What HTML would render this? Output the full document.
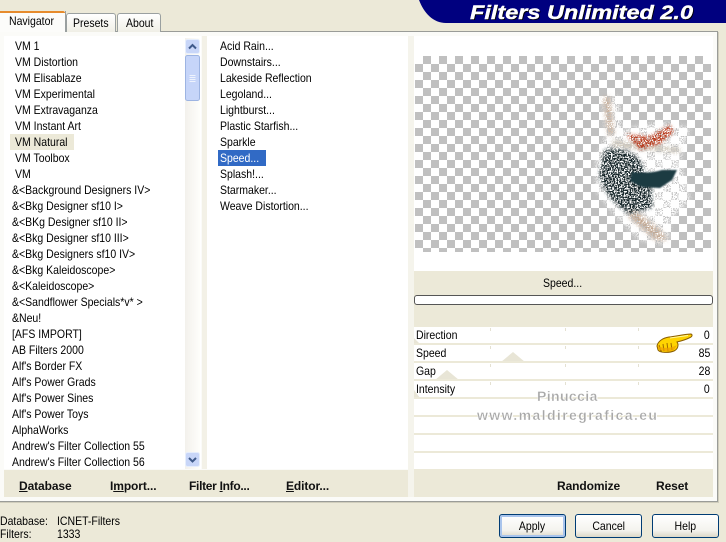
<!DOCTYPE html>
<html><head><meta charset="utf-8"><style>
html,body{margin:0;padding:0}
body{width:726px;height:542px;position:relative;overflow:hidden;background:#ece9d8;font-family:"Liberation Sans",sans-serif;font-size:12px;color:#000}
.a{position:absolute}
.t{position:absolute;white-space:nowrap;line-height:16px;height:16px;transform:scaleX(.875);transform-origin:0 50%}
.t.r{transform-origin:100% 50%}
.l{position:absolute;left:0;top:1px}
.l div{height:16px;line-height:16px;white-space:nowrap;position:absolute;transform:scaleX(.875);transform-origin:0 50%}
.b{position:absolute;font-weight:bold;font-size:12px;white-space:nowrap;line-height:16px;color:#111;letter-spacing:-.1px}
.line{position:absolute;left:414px;width:299px;height:2px;background:#ece9d8}
.tick{position:absolute;width:1px;height:3px;background:#e4e1d2}
.btn{position:absolute;top:514px;width:65px;height:22px;border:1px solid #003c74;border-radius:3px;background:linear-gradient(#fff,#f4f3ee 70%,#dcd8c8);text-align:center;line-height:22px}
.btn span{display:inline-block;transform:scaleX(.875)}
</style></head><body>
<!-- banner -->
<svg class="a" style="left:419px;top:0" width="307" height="24"><path d="M0 0H307V23H27C14 23 5 13 0 0Z" fill="#00007f"/>
<text x="51" y="19" font-family="Liberation Sans" font-weight="bold" font-style="italic" font-size="19" fill="#000" textLength="223" lengthAdjust="spacingAndGlyphs" transform="translate(1 1)">Filters Unlimited 2.0</text>
<text x="51" y="19" font-family="Liberation Sans" font-weight="bold" font-style="italic" font-size="19" fill="#fff" stroke="#fff" stroke-width=".4" textLength="223" lengthAdjust="spacingAndGlyphs">Filters Unlimited 2.0</text></svg>
<!-- panel -->
<div class="a" style="left:-2px;top:31px;width:718px;height:469px;border:1px solid #9a9c98;background:#fbfbf8;box-shadow:1px 1px 0 #d0cdbc"></div>
<!-- tabs -->
<div class="a" style="left:66px;top:13px;width:48px;height:18px;border:1px solid #9aa0a0;border-bottom:0;border-radius:3px 3px 0 0;background:linear-gradient(#fff,#f0efe6)"></div>
<div class="a" style="left:117px;top:13px;width:42px;height:18px;border:1px solid #9aa0a0;border-bottom:0;border-radius:3px 3px 0 0;background:linear-gradient(#fff,#f0efe6)"></div>
<div class="a" style="left:0;top:11px;width:65px;height:21px;background:#fcfcfa;border-right:1px solid #9aa0a0"></div>
<div class="a" style="left:0;top:11px;width:65px;height:2px;background:#e68b2c;border-radius:0 2px 0 0"></div>
<div class="t" style="left:9px;top:13px">Navigator</div>
<div class="t" style="left:73px;top:15px">Presets</div>
<div class="t" style="left:126px;top:15px">About</div>
<!-- lists -->
<div class="a" style="left:4px;top:36px;width:197px;height:433px;background:#fff"></div>
<div class="a" style="left:202px;top:36px;width:5px;height:433px;background:#f3f1e7"></div>
<div class="a" style="left:207px;top:36px;width:201px;height:433px;background:#fff"></div>
<div class="a" style="left:408px;top:36px;width:6px;height:461px;background:#f5f4ec"></div>
<div class="a" style="left:10px;top:134px;width:64px;height:16px;background:#ece9d8"></div>
<div class="a" style="left:218px;top:150px;width:48px;height:16px;background:#316ac5"></div>
<div class="l">
<div style="left:15px;top:37px">VM 1</div>
<div style="left:15px;top:53px">VM Distortion</div>
<div style="left:15px;top:69px">VM Elisablaze</div>
<div style="left:15px;top:85px">VM Experimental</div>
<div style="left:15px;top:101px">VM Extravaganza</div>
<div style="left:15px;top:117px">VM Instant Art</div>
<div style="left:15px;top:133px">VM Natural</div>
<div style="left:15px;top:149px">VM Toolbox</div>
<div style="left:15px;top:165px">VM</div>
<div style="left:12px;top:181px">&amp;&lt;Background Designers IV&gt;</div>
<div style="left:12px;top:197px">&amp;&lt;Bkg Designer sf10 I&gt;</div>
<div style="left:12px;top:213px">&amp;&lt;BKg Designer sf10 II&gt;</div>
<div style="left:12px;top:229px">&amp;&lt;Bkg Designer sf10 III&gt;</div>
<div style="left:12px;top:245px">&amp;&lt;Bkg Designers sf10 IV&gt;</div>
<div style="left:12px;top:261px">&amp;&lt;Bkg Kaleidoscope&gt;</div>
<div style="left:12px;top:277px">&amp;&lt;Kaleidoscope&gt;</div>
<div style="left:12px;top:293px">&amp;&lt;Sandflower Specials*v*&nbsp;&gt;</div>
<div style="left:12px;top:309px">&amp;Neu!</div>
<div style="left:12px;top:325px">[AFS IMPORT]</div>
<div style="left:12px;top:341px">AB Filters 2000</div>
<div style="left:12px;top:357px">Alf's Border FX</div>
<div style="left:12px;top:373px">Alf's Power Grads</div>
<div style="left:12px;top:389px">Alf's Power Sines</div>
<div style="left:12px;top:405px">Alf's Power Toys</div>
<div style="left:12px;top:421px">AlphaWorks</div>
<div style="left:12px;top:437px">Andrew's Filter Collection 55</div>
<div style="left:12px;top:453px">Andrew's Filter Collection 56</div>
<div style="left:220px;top:37px">Acid Rain...</div>
<div style="left:220px;top:53px">Downstairs...</div>
<div style="left:220px;top:69px">Lakeside Reflection</div>
<div style="left:220px;top:85px">Legoland...</div>
<div style="left:220px;top:101px">Lightburst...</div>
<div style="left:220px;top:117px">Plastic Starfish...</div>
<div style="left:220px;top:133px">Sparkle</div>
<div style="left:220px;top:149px;color:#fff">Speed...</div>
<div style="left:220px;top:165px">Splash!...</div>
<div style="left:220px;top:181px">Starmaker...</div>
<div style="left:220px;top:197px">Weave Distortion...</div>
</div>
<!-- scrollbar -->
<div class="a" style="left:185px;top:38px;width:15px;height:431px;background:linear-gradient(90deg,#f3f1ec,#fefefb)"></div>
<svg class="a" style="left:185px;top:38px" width="16" height="432">
<rect x=".5" y="1.5" width="14" height="14" rx="2" fill="#c8d6f8" stroke="#e6eefc"/>
<path d="M4 10.5L7.5 7L11 10.5" fill="none" stroke="#3f5a8a" stroke-width="2"/>
<rect x=".5" y="17.5" width="14" height="45" rx="2" fill="#c6d5f9" stroke="#9db4e2"/>
<path d="M4.500 37.500h6M4.500 39.500h6M4.500 41.500h6M4.500 43.500h6" stroke="#eef3fd" stroke-width="1"/>
<rect x=".5" y="414.500" width="14" height="14" rx="2" fill="#c8d6f8" stroke="#e6eefc"/>
<path d="M4 420L7.500 423.500L11 420" fill="none" stroke="#3f5a8a" stroke-width="2"/>
</svg>
<!-- preview -->
<div class="a" style="left:414px;top:36px;width:299px;height:235px;background:#fff"></div>
<svg class="a" style="left:415px;top:56px" width="296" height="196">
<defs>
<pattern id="c" width="16" height="16" patternUnits="userSpaceOnUse"><rect width="16" height="16" fill="#fff"/><rect x="8" width="8" height="8" fill="#c0c0c0"/><rect y="8" width="8" height="8" fill="#c0c0c0"/></pattern>
<filter id="s1" x="-20%" y="-20%" width="140%" height="140%"><feGaussianBlur stdDeviation="2.500" result="g"/><feTurbulence type="fractalNoise" baseFrequency=".8" numOctaves="2" seed="4"/><feColorMatrix values="0 0 0 0 0 0 0 0 0 0 0 0 0 0 0 0 0 0 14 -6" result="n"/><feComposite in="g" in2="n" operator="in"/></filter>
<filter id="s2" x="-20%" y="-20%" width="140%" height="140%"><feGaussianBlur stdDeviation="1.500" result="g"/><feTurbulence type="fractalNoise" baseFrequency=".7" numOctaves="2" seed="9"/><feColorMatrix values="0 0 0 0 0 0 0 0 0 0 0 0 0 0 0 0 0 0 14 -6.200" result="n"/><feComposite in="g" in2="n" operator="in"/></filter>
<filter id="bl"><feGaussianBlur stdDeviation=".8"/></filter>
</defs>
<rect width="296" height="196" fill="url(#c)"/>
<g transform="translate(-415 -56)">
<g filter="url(#s1)" fill="#fff">
<path d="M602 100L618 96L622 130L660 122L690 128L680 160L690 200L670 220L668 245L640 240L615 215L596 190L596 160L606 135Z"/>
</g>
<g filter="url(#s1)" fill="#bfa48e"><path d="M603 97L610 97L614 135L608 135Z"/><path d="M632 208L660 230L668 240L655 240L628 216Z"/></g>
<g filter="url(#s1)" fill="#c8c0b0"><path d="M612 140L680 148L680 153L612 147Z"/></g>
<g filter="url(#s2)" fill="#18262a"><path d="M604 150Q625 145 640 160L652 190L652 208L630 214Q605 200 599 175Z"/></g>
<g filter="url(#bl)"><path d="M632 172Q650 174 662 170L677 170L672 180L660 188L642 187L630 181Z" fill="#1c3a42"/></g>
<g filter="url(#s2)" fill="#b83a1c"><path d="M626 134L650 136L670 125L674 132L660 144L640 150Z"/></g>
</g>
</svg>
<!-- speed block -->
<div class="a" style="left:414px;top:271px;width:299px;height:56px;background:#ece9d8"></div>
<div class="t" style="left:543px;top:275px">Speed...</div>
<div class="a" style="left:414px;top:295px;width:297px;height:8px;border:1px solid #555;border-radius:3px;background:#fff"></div>
<!-- sliders -->
<div class="a" style="left:414px;top:327px;width:299px;height:143px;background:#fff"></div>
<svg class="a" style="left:414px;top:327px" width="120" height="72"><path d="M0 17V11L6 17ZM87 35L99 25L111 35ZM21 53L33 43L45 53ZM0 71V63L6 71Z" fill="#e8e5d6"/></svg>
<div class="line" style="top:343px"></div><div class="line" style="top:361px"></div><div class="line" style="top:379px"></div><div class="line" style="top:397px"></div><div class="line" style="top:415px"></div><div class="line" style="top:433px"></div><div class="line" style="top:451px"></div><div class="line" style="top:469px"></div>
<div class="tick" style="left:490px;top:328px"></div><div class="tick" style="left:565px;top:328px"></div><div class="tick" style="left:638px;top:328px"></div>
<div class="tick" style="left:490px;top:346px"></div><div class="tick" style="left:565px;top:346px"></div><div class="tick" style="left:638px;top:346px"></div>
<div class="tick" style="left:490px;top:364px"></div><div class="tick" style="left:565px;top:364px"></div><div class="tick" style="left:638px;top:364px"></div>
<div class="tick" style="left:490px;top:382px"></div><div class="tick" style="left:565px;top:382px"></div><div class="tick" style="left:638px;top:382px"></div>
<div class="t" style="left:416px;top:327px">Direction</div>
<div class="t" style="left:416px;top:345px">Speed</div>
<div class="t" style="left:416px;top:363px">Gap</div>
<div class="t" style="left:416px;top:381px">Intensity</div>
<div class="t r" style="right:16px;top:327px">0</div>
<div class="t r" style="right:16px;top:345px">85</div>
<div class="t r" style="right:16px;top:363px">28</div>
<div class="t r" style="right:16px;top:381px">0</div>
<!-- watermark -->
<div class="a" style="left:537px;top:388px;line-height:16px;white-space:nowrap;font-size:14px;font-weight:bold;color:#a8a8a8;letter-spacing:.4px;-webkit-text-stroke:.3px #fff;text-shadow:1px 1px 0 #fff">Pinuccia</div>
<div class="a" style="left:477px;top:407px;line-height:16px;white-space:nowrap;font-size:14px;font-weight:bold;color:#a8a8a8;letter-spacing:1.4px;-webkit-text-stroke:.3px #fff;text-shadow:1px 1px 0 #fff">www.maldiregrafica.eu</div>
<!-- hand -->
<svg class="a" style="left:655px;top:331px" width="40" height="23">
<path d="M2 15C3 10 8 7 14 6C22 5 31 3 36 3C38 4 37 6 34 7C30 9 26 10 22 11C24 14 23 18 19 20C14 22 5 22 3 19Z" fill="#ffd400" stroke="#8a5c00" stroke-width="1"/>
<path d="M4 14C6 18 4 20 7 20M8 13L9 20M12 12L13 20M16 12L17 19" fill="none" stroke="#a06a00"/>
<path d="M3 17C6 21 14 21 19 19L22 14C17 17 9 18 3 15Z" fill="#f0a000" opacity=".7"/>
<path d="M15 7L33 4.500" stroke="#fff6a0" stroke-width="1"/>
</svg>
<!-- bottom bars -->
<div class="a" style="left:4px;top:470px;width:404px;height:27px;background:#ece9d8"></div>
<div class="a" style="left:414px;top:470px;width:299px;height:27px;background:#ece9d8"></div>
<div class="b" style="left:19px;top:478px"><u>D</u>atabase</div>
<div class="b" style="left:110px;top:478px">I<u>m</u>port...</div>
<div class="b" style="left:189px;top:478px;letter-spacing:-.3px">Filter <u>I</u>nfo...</div>
<div class="b" style="left:286px;top:478px"><u>E</u>ditor...</div>
<div class="b" style="left:557px;top:478px">Randomize</div>
<div class="b" style="left:656px;top:478px">Reset</div>
<!-- status -->
<div class="t" style="left:0;top:513px">Database:</div>
<div class="t" style="left:57px;top:513px">ICNET-Filters</div>
<div class="t" style="left:0;top:526px">Filters:</div>
<div class="t" style="left:57px;top:526px">1333</div>
<!-- buttons -->
<div class="btn" style="left:499px;box-shadow:inset 0 0 0 2px #a9c4ec"><span>Apply</span></div>
<div class="btn" style="left:575px"><span>Cancel</span></div>
<div class="btn" style="left:652px"><span>Help</span></div>
</body></html>
